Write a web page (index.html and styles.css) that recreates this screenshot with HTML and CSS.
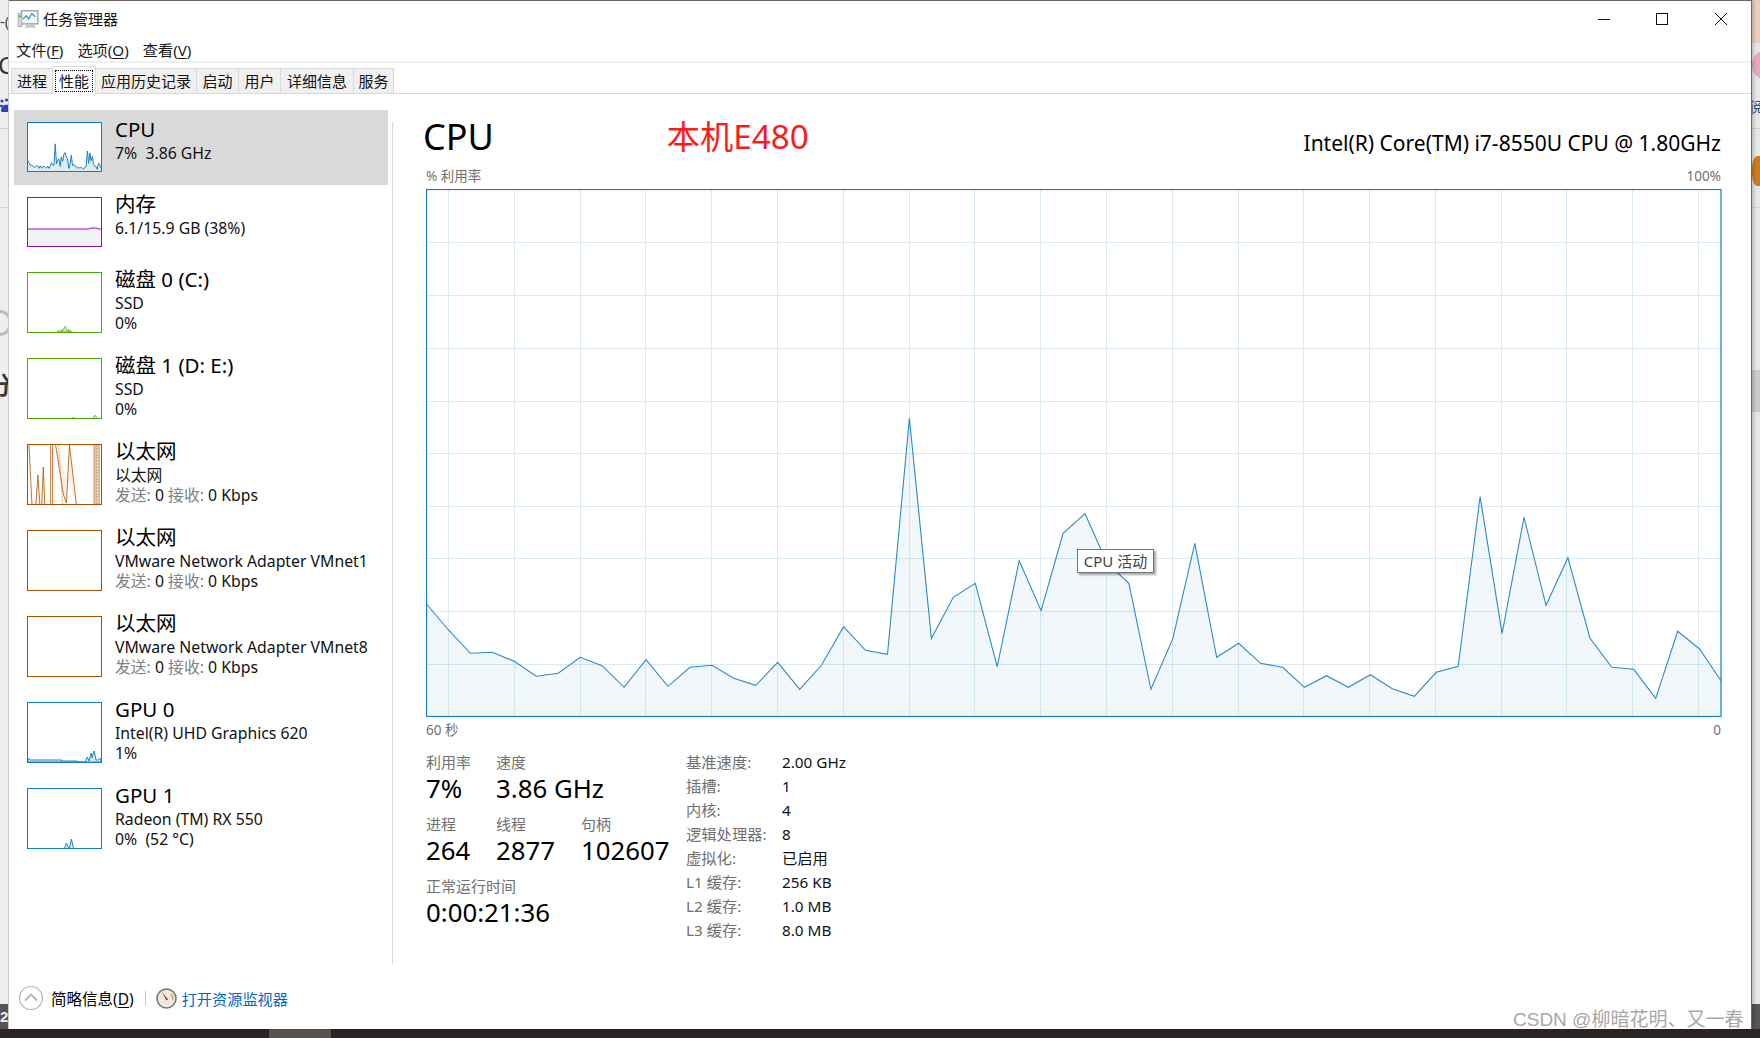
FILE: index.html
```html
<!DOCTYPE html>
<html lang="zh-CN">
<head>
<meta charset="utf-8">
<title>任务管理器</title>
<link rel="stylesheet" href="styles.css">
</head>
<body>
<div class="desktop">
  <div class="bit bit-dash">-(</div>
  <div class="bit bit-c">C</div>
  <svg class="bit bit-paw" width="9" height="15" viewBox="0 0 9 15" aria-hidden="true">
    <circle cx="2" cy="3" r="1.600" fill="#2b3fd0"/>
    <circle cx="6.500" cy="2" r="1.600" fill="#2b3fd0"/>
    <circle cx="1.500" cy="8" r="1.500" fill="#2b3fd0"/>
    <path d="M3 8c3-2 6-1 6 0v6H2c-2-1-1-3 1-6z" fill="#2b3fd0"/>
  </svg>
  <div class="bit bit-rule1"></div>
  <div class="bit bit-rule2"></div>
  <div class="bit bit-ring"></div>
  <div class="bit bit-fen">分</div>
  <div class="bit bit-num">2</div>
  <div class="bit bit-peach"></div>
  <div class="bit bit-pink"></div>
  <div class="bit bit-read">阅读</div>
  <div class="bit bit-orange"></div>
  <div class="bit bit-rule3"></div>
  <div class="bit bit-rule4"></div>
  <div class="bit bit-block"></div>
  <div class="bit bit-num2"></div>
  <div class="taskbar"><span class="taskbar-btn"></span></div>

  <main class="window">
    <header class="titlebar">
      <svg class="app-icon" viewBox="0 0 20 20" width="22" height="22" aria-hidden="true">
        <rect x="4" y="2.5" width="15" height="12" fill="#dbe7ee" stroke="#8b9499"/>
        <rect x="5" y="3.5" width="13" height="10" fill="#f4fafd"/>
        <path d="M5.5 10l3-3 2 3 3-5 3 3" fill="none" stroke="#3d97c9" stroke-width="1.2"/>
        <rect x="1" y="5" width="3.5" height="12" fill="#d7d9d8" stroke="#9ca1a0" stroke-width=".7"/>
        <rect x="1.6" y="6.5" width="2.2" height="2" fill="#55b848"/>
        <path d="M7 18h10l-1.5-3.5h-7z" fill="#c3c8ca"/>
      </svg>
      <span class="app-name">任务管理器</span>
      <div class="controls">
        <svg class="ctl ctl-min" width="14" height="14" viewBox="0 0 14 14" aria-hidden="true"><path d="M1 7.5h12" stroke="#111" fill="none"/></svg>
        <svg class="ctl ctl-max" width="14" height="14" viewBox="0 0 14 14" aria-hidden="true"><rect x="1.5" y="1.5" width="11" height="11" stroke="#111" fill="none"/></svg>
        <svg class="ctl ctl-close" width="14" height="14" viewBox="0 0 14 14" aria-hidden="true"><path d="M1 1l12 12M13 1L1 13" stroke="#111" fill="none"/></svg>
      </div>
    </header>

    <nav class="menubar">
      <span>文件(<u>F</u>)</span>
      <span>选项(<u>O</u>)</span>
      <span>查看(<u>V</u>)</span>
    </nav>

    <div class="tabs">
      <span class="tab tab-1">进程</span>
      <span class="tab tab-active"><span class="focus">性能</span></span>
      <span class="tab tab-3">应用历史记录</span>
      <span class="tab tab-4">启动</span>
      <span class="tab tab-5">用户</span>
      <span class="tab tab-6">详细信息</span>
      <span class="tab tab-7">服务</span>
    </div>

    <div class="main">
      <aside class="list">
        <div class="item item-short item-selected">
          <svg class="thumb thumb-blue thumb-short" viewBox="0 0 1296 528" preserveAspectRatio="none" aria-hidden="true">
            <use href="#cpu-area" class="area-blue"/>
            <use href="#cpu-line" class="line-blue"/>
          </svg>
          <div class="meta"><div class="name">CPU</div><div class="sub">7%&nbsp; 3.86 GHz</div></div>
        </div>
        <div class="item item-short">
          <svg class="thumb thumb-purple thumb-short" viewBox="0 0 74 48" preserveAspectRatio="none" aria-hidden="true">
            <path d="M0 31H61L64 30H69L72 31H74V48H0z" fill="#f4f2f4"/>
            <path d="M0 31H61L64 30H69L72 31H74" fill="none" stroke="#8b12ae"/>
          </svg>
          <div class="meta"><div class="name">内存</div><div class="sub">6.1/15.9 GB (38%)</div></div>
        </div>
        <div class="item">
          <svg class="thumb thumb-green" viewBox="0 0 74 59" preserveAspectRatio="none" aria-hidden="true">
            <path d="M30 59l1-2 2 2 1-3 1 3 1-3 2-3 2 6 1-3 1 3 1-2 1 2z" fill="#cde8b4" stroke="#6cb82c" stroke-width=".8"/>
          </svg>
          <div class="meta"><div class="name">磁盘 0 (C:)</div><div class="sub">SSD</div><div class="sub">0%</div></div>
        </div>
        <div class="item">
          <svg class="thumb thumb-green" viewBox="0 0 74 59" preserveAspectRatio="none" aria-hidden="true">
            <path d="M45 59l1-1 1 1M66 59l2-3 2 3" fill="#cde8b4" stroke="#6cb82c" stroke-width=".8"/>
          </svg>
          <div class="meta"><div class="name">磁盘 1 (D: E:)</div><div class="sub">SSD</div><div class="sub">0%</div></div>
        </div>
        <div class="item">
          <svg class="thumb thumb-orange" viewBox="0 0 74 59" preserveAspectRatio="none" aria-hidden="true">
            <path d="M1 0L4 59M8 59L10 30 12 59M14 59L15.500 22 17 59" fill="#fdf0e6" stroke="#b5651d" stroke-width=".9"/>
            <path d="M23 59V0M25 0V59M28 0L36 50 39 58 42 0 49 59" fill="#fdf0e6" stroke="#b5651d" stroke-width=".9"/>
            <path d="M67 59V0M69 0V59M72 0V59" fill="none" stroke="#b5651d" stroke-width=".9"/>
            <path d="M31 0L35 59M70.500 0V59" fill="none" stroke="#c98a56" stroke-width=".7" stroke-dasharray="2 1"/>
          </svg>
          <div class="meta"><div class="name">以太网</div><div class="sub">以太网</div><div class="sub"><span class="muted">发送:</span> 0 <span class="muted">接收:</span> 0 Kbps</div></div>
        </div>
        <div class="item">
          <div class="thumb thumb-orange"></div>
          <div class="meta"><div class="name">以太网</div><div class="sub">VMware Network Adapter VMnet1</div><div class="sub"><span class="muted">发送:</span> 0 <span class="muted">接收:</span> 0 Kbps</div></div>
        </div>
        <div class="item">
          <div class="thumb thumb-orange"></div>
          <div class="meta"><div class="name">以太网</div><div class="sub">VMware Network Adapter VMnet8</div><div class="sub"><span class="muted">发送:</span> 0 <span class="muted">接收:</span> 0 Kbps</div></div>
        </div>
        <div class="item">
          <svg class="thumb thumb-blue" viewBox="0 0 74 59" preserveAspectRatio="none" aria-hidden="true">
            <path d="M0 59V55L2 57H34V58H42H50V59H58L60 54 62 58 64 50 65 55 67 48 69 57H71L74 55V59z" fill="#e3f0f8" stroke="#1b84be"/>
          </svg>
          <div class="meta"><div class="name">GPU 0</div><div class="sub">Intel(R) UHD Graphics 620</div><div class="sub">1%</div></div>
        </div>
        <div class="item">
          <svg class="thumb thumb-blue" viewBox="0 0 74 59" preserveAspectRatio="none" aria-hidden="true">
            <path d="M37 59l2-5 2 5M42 59l2-9 2 9" fill="#e3f0f8" stroke="#1b84be"/>
          </svg>
          <div class="meta"><div class="name">GPU 1</div><div class="sub">Radeon (TM) RX 550</div><div class="sub">0%&nbsp; (52 °C)</div></div>
        </div>
      </aside>

      <div class="divider"></div>

      <section class="detail">
        <div class="head">
          <h1 class="title">CPU</h1>
          <div class="note">本机E480</div>
          <div class="model">Intel(R) Core(TM) i7-8550U CPU @ 1.80GHz</div>
        </div>
        <div class="axis axis-top"><span>% 利用率</span><span>100%</span></div>
        <div class="chart">
          <svg class="chart-svg" width="1296" height="528" viewBox="0 0 1296 528" aria-hidden="true">
            <defs>
              <path id="cpu-area" d="M0.5 415L22.500 441 44.400 464.300 66.400 463.300 88.300 472.300 110.300 487.300 132.200 484.300 154.200 468.300 176.100 476.700 198.100 498.300 220 470.700 242 497.300 263.900 478.300 285.900 476.300 307.800 489.300 329.800 496.300 351.700 473.300 373.700 500.300 395.600 476 417.600 437.700 439.500 461.300 461.500 465.300 483.400 229.300 505.400 449.300 527.300 408.300 549.300 394.300 571.200 477.700 593.200 371.700 615.100 421.700 637.100 344.300 659 324.700 681 374 702.900 394.300 724.900 500.300 746.800 449.700 768.800 354.300 790.700 468.300 812.700 454.300 834.600 474.300 856.600 478.300 878.500 498.300 900.500 486.700 922.400 498.300 944.400 485.700 966.300 499.700 988.300 507.300 1010.200 483.300 1032.200 477.300 1054.100 307.700 1076.100 444.700 1098 328.300 1120 416.300 1141.900 368.700 1163.900 449 1185.800 478.300 1207.800 480.300 1229.700 509.300 1251.700 442.300 1273.600 460 1295 491.700V527.500H0.5z"/>
              <path id="cpu-line" class="series" d="M0.5 415L22.500 441 44.400 464.300 66.400 463.300 88.300 472.300 110.300 487.300 132.200 484.300 154.200 468.300 176.100 476.700 198.100 498.300 220 470.700 242 497.300 263.900 478.300 285.900 476.300 307.800 489.300 329.800 496.300 351.700 473.300 373.700 500.300 395.600 476 417.600 437.700 439.500 461.300 461.500 465.300 483.400 229.300 505.400 449.300 527.300 408.300 549.300 394.300 571.200 477.700 593.200 371.700 615.100 421.700 637.100 344.300 659 324.700 681 374 702.900 394.300 724.900 500.300 746.800 449.700 768.800 354.300 790.700 468.300 812.700 454.300 834.600 474.300 856.600 478.300 878.500 498.300 900.500 486.700 922.400 498.300 944.400 485.700 966.300 499.700 988.300 507.300 1010.200 483.300 1032.200 477.300 1054.100 307.700 1076.100 444.700 1098 328.300 1120 416.300 1141.900 368.700 1163.900 449 1185.800 478.300 1207.800 480.300 1229.700 509.300 1251.700 442.300 1273.600 460 1295 491.700"/>
            </defs>
            <path class="grid" d="M22.500 0V528M88.500 0V528M154.500 0V528M219.500 0V528M285.500 0V528M351.500 0V528M417.500 0V528M483.500 0V528M548.500 0V528M614.500 0V528M680.500 0V528M746.500 0V528M812.500 0V528M877.500 0V528M943.500 0V528M1009.500 0V528M1075.500 0V528M1140.500 0V528M1206.500 0V528M1272.500 0V528M0 53.500H1295M0 106.500H1295M0 159.500H1295M0 212.500H1295M0 264.500H1295M0 317.500H1295M0 369.500H1295M0 422.500H1295M0 475.500H1295"/>
            <use href="#cpu-area" class="chart-area"/>
            <use href="#cpu-line" class="chart-line"/>
            <rect class="chart-frame" x="0.5" y="0.5" width="1294.500" height="527"/>
          </svg>
          <div class="tip">CPU 活动</div>
        </div>
        <div class="axis axis-bottom"><span>60 秒</span><span>0</span></div>

        <div class="stats">
          <div class="live">
            <div class="stat"><div class="lab">利用率</div><div class="val">7%</div></div>
            <div class="stat stat-wide"><div class="lab">速度</div><div class="val">3.86 GHz</div></div>
            <div class="stat"><div class="lab">进程</div><div class="val">264</div></div>
            <div class="stat"><div class="lab">线程</div><div class="val">2877</div></div>
            <div class="stat"><div class="lab">句柄</div><div class="val">102607</div></div>
            <div class="stat stat-full"><div class="lab">正常运行时间</div><div class="val">0:00:21:36</div></div>
          </div>
          <dl class="specs">
            <dt>基准速度:</dt><dd>2.00 GHz</dd>
            <dt>插槽:</dt><dd>1</dd>
            <dt>内核:</dt><dd>4</dd>
            <dt>逻辑处理器:</dt><dd>8</dd>
            <dt>虚拟化:</dt><dd>已启用</dd>
            <dt>L1 缓存:</dt><dd>256 KB</dd>
            <dt>L2 缓存:</dt><dd>1.0 MB</dd>
            <dt>L3 缓存:</dt><dd>8.0 MB</dd>
          </dl>
        </div>
      </section>
    </div>

    <footer class="footer">
      <svg class="fold" width="26" height="26" viewBox="0 0 26 26" aria-hidden="true">
        <circle cx="13" cy="13" r="11.500" fill="#fff" stroke="#b4b4b4" stroke-width="1.200"/>
        <path d="M7 15.500l6-6 6 6" fill="none" stroke="#b4b4b4" stroke-width="1.800"/>
      </svg>
      <span class="fold-text">简略信息(<u>D</u>)</span>
      <span class="foot-sep"></span>
      <svg class="gauge" width="21" height="21" viewBox="0 0 21 21" aria-hidden="true">
        <circle cx="10.500" cy="10.500" r="9.500" fill="#ece9e0" stroke="#77756f" stroke-width="1.600"/>
        <path d="M15 6a6 6 0 0 1 1.500 6" fill="none" stroke="#d89a60" stroke-width="1.200"/>
        <path d="M6 4l4.500 8.500 1.500-1z" fill="#c0101a"/>
      </svg>
      <span class="foot-link">打开资源监视器</span>
    </footer>
  </main>

  <div class="watermark">CSDN @柳暗花明、又一春</div>
</div>
</body>
</html>
```
FILE: styles.css
```css
* { box-sizing: border-box; }
html, body { margin: 0; padding: 0; height: 100%; }
body {
  width: 1760px;
  height: 1038px;
  overflow: hidden;
  font-family: "Noto Sans", "Noto Sans CJK SC", sans-serif;
  color: #000;
  font-size: 15px;
}
u { text-underline-offset: 2px; }

.desktop {
  position: relative;
  width: 1760px;
  height: 1038px;
  overflow: hidden;
  background: linear-gradient(90deg, #eeeeee 0, #e6e6e6 1753px, #e6e6e6 100%);
}

.bit { position: absolute; }
.bit-dash { left: 0; top: 9px; font-size: 15px; color: #444; line-height: 24px; }
.bit-c { left: -2px; top: 50px; font-size: 24px; line-height: 30px; color: #333; }
.bit-paw { left: 0; top: 98px; }
.bit-rule1 { left: 0; top: 128px; width: 9px; height: 1px; background: #cfcfcf; }
.bit-rule2 { left: 0; top: 207px; width: 9px; height: 1px; background: #d4d4d4; }
.bit-ring { left: -12px; top: 310px; width: 24px; height: 26px; border: 3px solid #bcbcbc; border-radius: 50%; }
.bit-fen { left: -12px; top: 370px; font-size: 24px; line-height: 30px; font-weight: 700; color: #3a3a3a; }
.bit-num { left: 0; top: 1004px; width: 9px; height: 25px; background: #555; color: #eee; font-size: 15px; line-height: 25px; font-weight: 700; font-family: "Liberation Sans", sans-serif; overflow: hidden; }
.bit-peach { left: 1751px; top: 0; width: 9px; height: 43px; background: #e9cdbf; }
.bit-pink { left: 1752px; top: 51px; width: 24px; height: 28px; background: #e6a9c0; border-radius: 50%; }
.bit-read { left: 1750px; top: 97px; font-size: 15px; line-height: 20px; color: #34506e; white-space: nowrap; }
.bit-orange { left: 1752px; top: 156px; width: 14px; height: 30px; background: #cf7a24; border-radius: 40%; }
.bit-rule3 { left: 1751px; top: 128px; width: 9px; height: 1px; background: #cfcfcf; }
.bit-rule4 { left: 1751px; top: 207px; width: 9px; height: 1px; background: #d4d4d4; }
.bit-block { left: 1751px; top: 370px; width: 9px; height: 42px; background: #c8cccc; }
.bit-num2 { left: 1751px; top: 1004px; width: 9px; height: 25px; background: #555; }

.taskbar {
  position: absolute;
  left: 0;
  right: 0;
  bottom: 0;
  height: 9px;
  background: #2a2523;
}
.taskbar-btn {
  position: absolute;
  left: 269px;
  top: 0;
  width: 62px;
  height: 9px;
  background: #59534f;
}

.window {
  position: absolute;
  left: 9px;
  top: 0;
  width: 1743px;
  height: 1029px;
  display: flex;
  flex-direction: column;
  background: #fff;
  border-top: 1px solid #6e6662;
  border-right: 1px solid #6e6662;
  box-shadow: -1px 0 0 #c8c8c8, 2px 0 3px rgba(0, 0, 0, .18);
}

.titlebar {
  flex: none;
  height: 35px;
  display: flex;
  align-items: center;
  padding-left: 8px;
}
.app-icon { flex: none; }
.app-name { margin-left: 4px; font-size: 15px; line-height: 20px; color: #111; }
.controls { margin-left: auto; display: flex; padding-right: 23px; }
.ctl { display: block; }
.ctl-max { margin-left: 44px; }
.ctl-close { margin-left: 45px; }

.menubar {
  flex: none;
  height: 25px;
  padding: 2px 0 0 7px;
  display: flex;
  align-items: center;
  gap: 14px;
  font-size: 15.200px;
  color: #1a1a1a;
  border-bottom: 2px solid #f0f0f0;
  box-sizing: content-box;
  margin-top: -2px;
}

.tabs {
  flex: none;
  height: 31px;
  display: flex;
  align-items: flex-end;
  padding-left: 2px;
  border-bottom: 1px solid #d9d9d9;
}
.tab {
  height: 25px;
  margin-right: -1px;
  padding-bottom: 2px;
  display: flex;
  align-items: center;
  justify-content: center;
  background: #f0f0f0;
  border: 1px solid #d9d9d9;
  border-bottom: 0;
  font-size: 15px;
  color: #111;
}
.tab-1 { width: 42px; }
.tab-active {
  position: relative;
  width: 44px;
  height: 28px;
  background: #fff;
  margin-bottom: -1px;
  padding-bottom: 0;
  z-index: 1;
}
.focus {
  width: 38px;
  height: 22px;
  display: flex;
  align-items: center;
  justify-content: center;
  border: 1px dotted #000;
}
.tab-3 { width: 102px; }
.tab-4 { width: 43px; }
.tab-5 { width: 43px; }
.tab-6 { width: 74px; }
.tab-7 { width: 41px; }

.main {
  flex: 1;
  min-height: 0;
  display: flex;
}

.list {
  flex: none;
  width: 383px;
  padding: 16px 4px 0 5px;
}
.item {
  height: 86px;
  display: flex;
  padding: 12px 0 0 13px;
}
.item-short { height: 75px; }
.item-selected { background: #d9d9d9; }
.thumb {
  display: block;
  flex: none;
  width: 75px;
  height: 61px;
  border: 1px solid;
  background: #fff;
}
.thumb-short { height: 50px; }
.thumb-blue { border-color: #117dbb; }
.thumb-purple { border-color: #8b12ae; }
.thumb-green { border-color: #4da60c; }
.thumb-orange { border-color: #a74f01; }
.series { vector-effect: non-scaling-stroke; }
.area-blue { fill: #dfecf5; }
.line-blue { fill: none; stroke: #1b84be; stroke-width: 1; }
.meta { margin-left: 13px; margin-top: -6.500px; white-space: nowrap; }
.name { font-size: 20.500px; line-height: 27px; color: #000; }
.sub { font-size: 15.800px; line-height: 20px; color: #111; }
.muted { color: #808080; }

.divider {
  flex: none;
  width: 1px;
  margin-top: 28px;
  background: #d9d9d9;
}

.detail {
  flex: 1;
  min-width: 0;
  padding: 0 30px 0 33px;
}
.head {
  height: 72px;
  display: flex;
  align-items: flex-start;
  white-space: nowrap;
}
.title {
  margin: 15px 0 0 -3px;
  font-size: 36px;
  line-height: 56px;
  font-weight: 400;
}
.note {
  margin: 21px 0 0 173px;
  font-size: 33.200px;
  line-height: 44px;
  color: #ff1a1a;
}
.model {
  margin: 35px 0 0 auto;
  font-size: 21px;
  line-height: 28px;
  color: #000;
}

.axis {
  display: flex;
  justify-content: space-between;
  height: 20px;
  font-size: 13.500px;
  line-height: 20px;
  color: #707070;
}
.axis-top { height: 23px; }

.chart { position: relative; width: 1296px; height: 528px; }
.chart-svg { display: block; }
.grid { fill: none; stroke: #d9eaf4; stroke-width: 1; }
.chart-area { fill: #117dbb; fill-opacity: .06; }
.chart-line { fill: none; stroke: #2b8cc4; stroke-width: 1.100; }
.chart-frame { fill: none; stroke: #117dbb; stroke-width: 1.200; }
.tip {
  position: absolute;
  left: 651px;
  top: 360px;
  width: 77px;
  height: 24px;
  background: #fff;
  border: 1px solid #767676;
  box-shadow: 2px 2px 2px rgba(0, 0, 0, .35);
  font-size: 15px;
  line-height: 22px;
  text-align: center;
  color: #444;
  white-space: nowrap;
}

.axis-bottom { margin-top: 3px; }

.stats { display: flex; align-items: flex-start; }
.live {
  flex: none;
  width: 260px;
  margin-top: 12px;
  display: grid;
  grid-template-columns: 70px 85px auto;
  row-gap: 9px;
}
.stat-wide { grid-column: span 2; }
.stat-full { grid-column: 1 / -1; }
.lab { font-size: 15px; line-height: 20px; color: #707070; }
.val { font-size: 25.800px; line-height: 33px; color: #000; white-space: nowrap; }
.specs {
  margin: 10px 0 0;
  display: grid;
  grid-template-columns: 96px auto;
  grid-auto-rows: 24px;
  font-size: 15.300px;
  line-height: 24px;
}
.specs dt { color: #707070; }
.specs dd { margin: 0; color: #111; }

.footer {
  flex: none;
  height: 65px;
  padding: 3px 0 0 9px;
  display: flex;
  align-items: center;
}
.fold-text { margin-left: 7px; font-size: 15.500px; color: #000; }
.foot-sep { width: 1px; height: 15px; margin: 0 10px 0 11px; background: #c8c8c8; }
.foot-link { margin-left: 5px; font-size: 15.200px; color: #0066cc; }

.watermark {
  position: absolute;
  left: 1513px;
  top: 1008px;
  font-family: "Liberation Sans", "Noto Sans CJK SC", sans-serif;
  font-size: 19px;
  line-height: 24px;
  color: #a8a8a8;
  white-space: nowrap;
}
```
